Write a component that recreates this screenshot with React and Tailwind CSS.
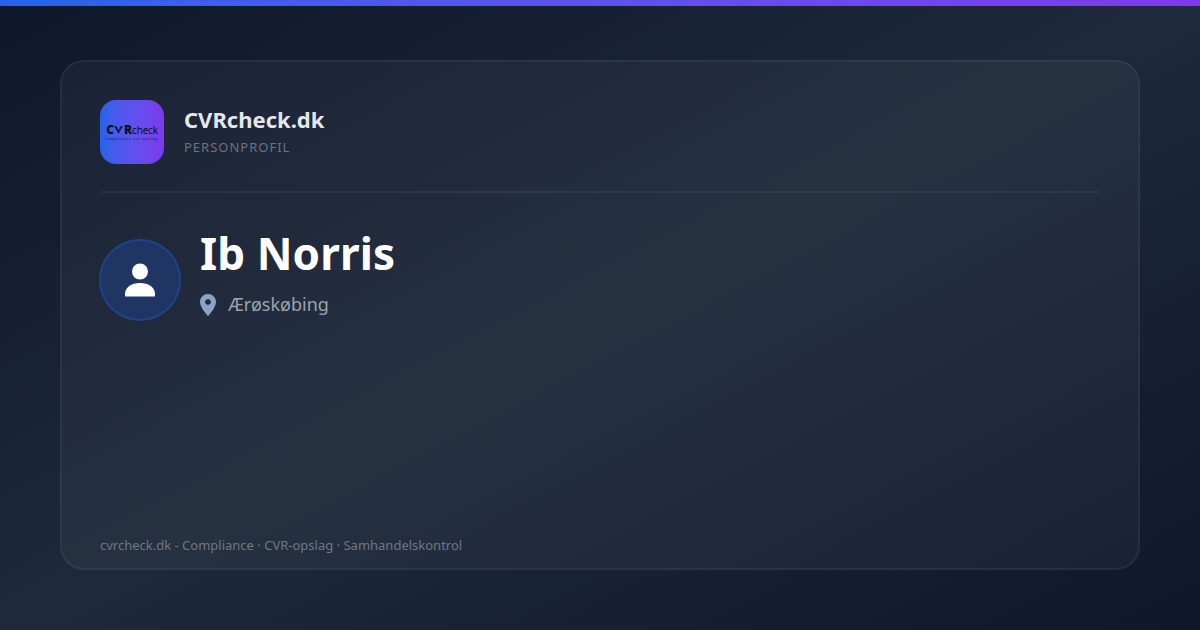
function Logo() {
  return (
    <div className="flex h-16 w-16 shrink-0 flex-col items-center justify-center rounded-2xl bg-gradient-to-r from-[#2563eb] to-[#7c3aed]">
      <div className="flex items-baseline leading-[11px] text-[#0a0f24]">
        <span className="text-[12px] font-black">C</span>
        <svg width="9" height="9" viewBox="0 0 9 9" className="mx-[0.5px]">
          <path d="M0 1 L2.4 1 L4.5 5 L6.6 1 L9 1 L4.5 9 Z" fill="#101c52" />
        </svg>
        <span className="text-[12px] font-black">R</span>
        <span className="text-[10px] tracking-[-0.2px]">check</span>
      </div>
      <div className="mt-[2px] text-[3px] leading-[3px] tracking-[1px] text-[#0a0f24]">
        compliance cvr opslag
      </div>
    </div>
  );
}

function PersonIcon() {
  return (
    <svg width="30" height="34" viewBox="0 0 30 34" fill="#ffffff">
      <circle cx="15" cy="8.5" r="8" />
      <path d="M0 33.5 V31 C0 24.5 6 20 15 20 C24 20 30 24.5 30 31 V33.5 Z" />
    </svg>
  );
}

function PinIcon() {
  return (
    <svg width="16" height="22" viewBox="0 0 16 22">
      <path
        fillRule="evenodd"
        fill="#8ca3c4"
        d="M8 0 C3.6 0 0 3.5 0 7.9 C0 13.5 8 22 8 22 C8 22 16 13.5 16 7.9 C16 3.5 12.4 0 8 0 Z M8 5.2 A2.8 2.8 0 1 1 8 10.8 A2.8 2.8 0 1 1 8 5.2 Z"
      />
    </svg>
  );
}

export default function App() {
  return (
    <div className="relative flex h-[630px] w-[1200px] flex-col overflow-hidden bg-gradient-to-br from-[#0f172a] via-[#1e293b] to-[#0f172a] font-['Noto_Sans',sans-serif]">
      {/* Top accent bar */}
      <div className="h-1.5 w-full bg-gradient-to-r from-[#2563eb] to-[#7c3aed]" />

      <div className="flex flex-1 p-[60px] pt-[54px]">
        <div className="flex flex-1 flex-col rounded-3xl border-2 border-white/[0.05] bg-white/[0.04] px-[38px] pt-[38px] pb-[14px]">
          {/* Brand header */}
          <div className="flex items-center gap-5 border-b-2 border-white/[0.05] pb-[27px]">
            <Logo />
            <div className="pb-[5px]">
              <div className="text-[22px] leading-[30px] font-bold text-[#e5e7eb]">CVRcheck.dk</div>
              <div className="mt-1 text-[13px] leading-[18px] tracking-[1px] text-[#6b7280]">PERSONPROFIL</div>
            </div>
          </div>

          {/* Person */}
          <div className="mt-7 -ml-px flex items-start gap-[19px]">
            <div className="mt-[18px] flex h-[82px] w-[82px] shrink-0 items-center justify-center rounded-full border-2 border-[#1e4489] bg-[#1f3563]">
              <PersonIcon />
            </div>
            <div>
              <div className="text-[44px] leading-[64px] font-bold tracking-[0.1px] text-white">Ib Norris</div>
              <div className="mt-[6px] flex items-center gap-3">
                <PinIcon />
                <span className="pb-[2px] text-lg leading-[26px] text-[#9ca3af]">Ærøskøbing</span>
              </div>
            </div>
          </div>

          {/* Footer */}
          <div className="mt-auto text-[13px] leading-[18px] text-[#707784]">
            cvrcheck.dk - Compliance · CVR-opslag · Samhandelskontrol
          </div>
        </div>
      </div>
    </div>
  );
}
